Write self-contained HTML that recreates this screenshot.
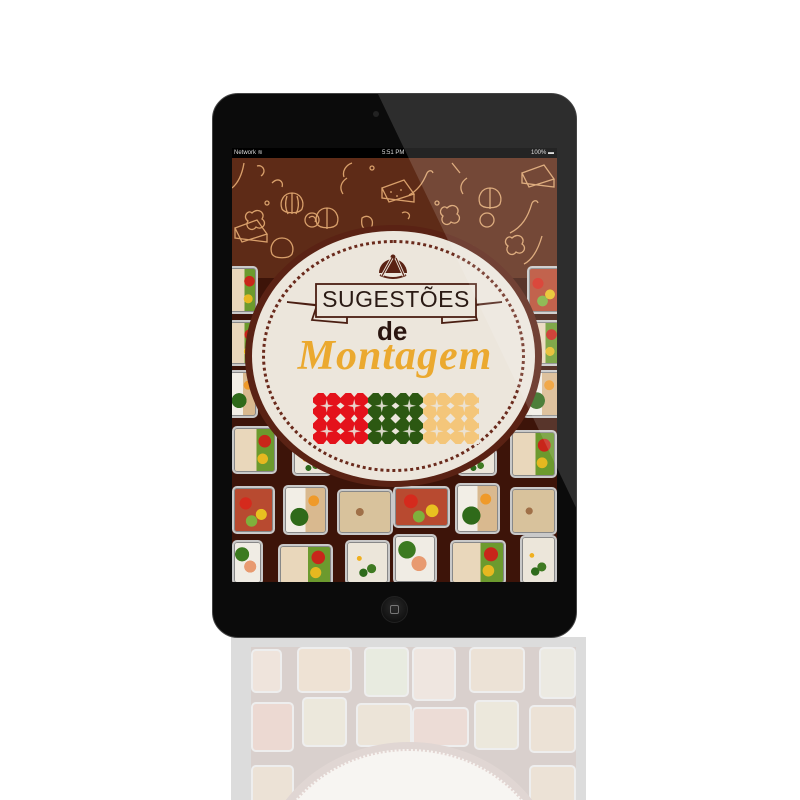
<!DOCTYPE html>
<html><head><meta charset="utf-8"><style>
*{margin:0;padding:0;box-sizing:border-box}
html,body{width:800px;height:800px;overflow:hidden}
body{background:#fff;position:relative;font-family:"Liberation Sans",sans-serif}
.ipad{position:absolute;left:212px;top:93px;width:365px;height:545px;background:#0b0b0b;border-radius:26px;border:1px solid #444;overflow:hidden}
.screen{position:absolute;width:325px;height:434px;background:#3d1409;overflow:hidden}
.bx{position:absolute;border:2px solid #c9c9c9;border-radius:5px;box-shadow:0 0 0 1px #888 inset}
.rice{background:radial-gradient(circle at 30% 40%,#f0b020 0 6%,transparent 7%),radial-gradient(circle at 60% 65%,#3f7a22 0 12%,transparent 13%),radial-gradient(circle at 40% 75%,#2e6b1c 0 10%,transparent 11%),#ece6da}
.chk{background:radial-gradient(circle at 75% 30%,#c8261a 0 14%,transparent 15%),radial-gradient(circle at 70% 70%,#e6b820 0 12%,transparent 13%),linear-gradient(90deg,#e9d7bb 0 55%,#6c9a2e 55%)}
.sal{background:radial-gradient(circle at 30% 35%,#d52a1d 0 15%,transparent 16%),radial-gradient(circle at 70% 60%,#e8c020 0 14%,transparent 15%),radial-gradient(circle at 45% 75%,#7fb03c 0 14%,transparent 15%),#b84a30}
.pas{background:radial-gradient(circle at 40% 50%,#a07048 0 10%,transparent 11%),#d8c29c}
.brc{background:radial-gradient(circle at 35% 65%,#2f6a1a 0 22%,transparent 23%),radial-gradient(circle at 70% 30%,#ef9a2a 0 12%,transparent 13%),linear-gradient(90deg,#f2eee6 0 50%,#d9b98f 50%)}
.sal2{background:radial-gradient(circle at 30% 30%,#3c7a20 0 20%,transparent 21%),radial-gradient(circle at 60% 60%,#e89a70 0 20%,transparent 21%),#f0ece4}
</style></head><body>

<!-- reflection -->
<div style="position:absolute;left:231px;top:637px;width:355px;height:163px;background:#dcdcdc"></div>
<div style="position:absolute;left:251px;top:647px;width:325px;height:153px;overflow:hidden;">
 <div style="position:absolute;left:0;top:0;width:325px;height:153px;background:#d9d0cd"></div>
 <div class="bx" style="left:0;top:2px;width:31px;height:44px;background:#efe4dc;border-color:#eee;box-shadow:none"></div>
 <div class="bx" style="left:46px;top:0;width:55px;height:46px;background:#eee2d4;border-color:#eee;box-shadow:none"></div>
 <div class="bx" style="left:113px;top:0;width:45px;height:50px;background:#e8ebe0;border-color:#eee;box-shadow:none"></div>
 <div class="bx" style="left:161px;top:0;width:44px;height:54px;background:#efe6e0;border-color:#eee;box-shadow:none"></div>
 <div class="bx" style="left:218px;top:0;width:56px;height:46px;background:#ece2d6;border-color:#eee;box-shadow:none"></div>
 <div class="bx" style="left:288px;top:0;width:37px;height:52px;background:#eceae2;border-color:#eee;box-shadow:none"></div>
 <div class="bx" style="left:0;top:55px;width:43px;height:50px;background:#ecd9d2;border-color:#eee;box-shadow:none"></div>
 <div class="bx" style="left:51px;top:50px;width:45px;height:50px;background:#ece8dc;border-color:#eee;box-shadow:none"></div>
 <div class="bx" style="left:105px;top:56px;width:56px;height:44px;background:#ece4d8;border-color:#eee;box-shadow:none"></div>
 <div class="bx" style="left:161px;top:60px;width:57px;height:40px;background:#ecdcd6;border-color:#eee;box-shadow:none"></div>
 <div class="bx" style="left:223px;top:53px;width:45px;height:50px;background:#ece8dc;border-color:#eee;box-shadow:none"></div>
 <div class="bx" style="left:278px;top:58px;width:47px;height:48px;background:#ece2d6;border-color:#eee;box-shadow:none"></div>
 <div class="bx" style="left:0;top:118px;width:43px;height:40px;background:#ece2d6;border-color:#eee;box-shadow:none"></div>
 <div class="bx" style="left:278px;top:118px;width:47px;height:40px;background:#ece2d6;border-color:#eee;box-shadow:none"></div>
 <div style="position:absolute;left:8px;top:95px;width:300px;height:270px;border-radius:50%;background:#e0d6d3"></div>
 <div style="position:absolute;left:15px;top:102px;width:286px;height:258px;border-radius:50%;background:#f7f5f2;border:2px dotted #e3d5d2"></div>
 <div style="position:absolute;left:82px;top:158px;width:165px;height:20px;background:linear-gradient(90deg,#f0b8b4 0 33%,#c8d2bb 33% 66%,#f8e6cc 66%)"></div>
</div>

<div class="ipad">
 <div style="position:absolute;left:160px;top:17px;width:6px;height:6px;border-radius:50%;background:#222"></div>
 <div class="screen" style="left:19px;top:54px;">
  <div style="position:absolute;left:0;top:0;width:325px;height:10px;background:#000;color:#ddd;font-size:6px;line-height:10px">
   <span style="position:absolute;left:2px">Network ≋</span>
   <span style="position:absolute;left:150px">5:51 PM</span>
   <span style="position:absolute;right:3px">100% ▬</span>
  </div>
  <div style="position:absolute;left:0;top:10px;width:325px;height:120px;background:#5e2b17"></div>
  <svg style="position:absolute;left:0;top:10px" width="325" height="140" fill="none" stroke="#d9a06b" stroke-width="1.3">
   <path d="M60 35c-8 0-13 8-10 16 3 5 17 5 20 0 3-8-2-16-10-16zM60 35v21M55 38c-2 6-2 12 1 18M65 38c2 6 2 12-1 18"/>
   <path d="M150 30l22-8 10 14-25 8zM150 30v10l32 4v-8M158 34h2M168 32h2M164 38h2"/>
   <path d="M195 15c-4 10-10 18-18 22M195 15c2-3 5-3 6 0"/>
   <path d="M258 30c-8 0-13 8-10 16 3 5 17 5 20 0 3-8-2-16-10-16zM258 30v21"/>
   <path d="M290 15l22-8 10 14-25 8zM290 15v10l32 4v-8"/>
   <path d="M95 50c-8 0-13 8-10 16 3 5 17 5 20 0 3-8-2-16-10-16zM95 50v21"/>
   <circle cx="80" cy="62" r="7"/><path d="M77 60a3 3 0 0 1 6 4"/>
   <circle cx="255" cy="62" r="7"/>
   <path d="M20 55c6-6 14 0 10 6 6 4 0 12-6 8-4 6-12 0-8-6-6-4 0-12 4-8z"/>
   <path d="M215 50c6-6 14 0 10 6 6 4 0 12-6 8-4 6-12 0-8-6-6-4 0-12 4-8z"/>
   <path d="M3 70l22-8 10 14-25 8zM3 70v10l32 4v-8"/>
   <path d="M50 80c-8 0-13 8-10 16 3 5 17 5 20 0 3-8-2-16-10-16z"/>
   <path d="M300 45c-4 14-10 24-22 30M300 45c2-3 5-3 6 0"/>
   <path d="M12 5c-2 12-6 20-12 25M130 60c6-4 12 0 10 8-4 6-12 4-10-8z"/>
   <path d="M280 80c6-6 14 0 10 6 6 4 0 12-6 8-4 6-12 0-8-6-6-4 0-12 4-8z"/>
   <path d="M310 78c-4 14-10 24-18 28"/>
   <path d="M25 8c6-2 10 6 4 10M115 20c-6 4-8 10-4 16M235 20c-6 4-8 10-4 16"/>
   <path d="M120 5c-6 2-10 8-8 14M220 5l8 10M170 55c5-3 10 2 6 6M40 25c6-6 12-2 10 4"/>
   <circle cx="140" cy="10" r="2"/><circle cx="205" cy="45" r="2"/><circle cx="110" cy="80" r="2"/><circle cx="240" cy="90" r="2"/><circle cx="35" cy="45" r="2"/>
  </svg>
  <div class="bx chk" style="left:-4px;top:118px;width:30px;height:48px"></div>
  <div class="bx chk" style="left:-4px;top:172px;width:30px;height:46px"></div>
  <div class="bx brc" style="left:-4px;top:222px;width:30px;height:48px"></div>
  <div class="bx chk" style="left:0;top:278px;width:45px;height:48px"></div>
  <div class="bx sal" style="left:295px;top:118px;width:34px;height:48px"></div>
  <div class="bx chk" style="left:295px;top:172px;width:34px;height:46px"></div>
  <div class="bx brc" style="left:290px;top:222px;width:40px;height:48px"></div>
  <div class="bx chk" style="left:278px;top:282px;width:47px;height:48px"></div>
  <div class="bx rice" style="left:60px;top:300px;width:40px;height:28px"></div>
  <div class="bx rice" style="left:225px;top:300px;width:40px;height:28px"></div>
  <div class="bx sal" style="left:0;top:338px;width:43px;height:48px"></div>
  <div class="bx brc" style="left:51px;top:337px;width:45px;height:50px"></div>
  <div class="bx pas" style="left:105px;top:341px;width:56px;height:46px"></div>
  <div class="bx sal" style="left:161px;top:338px;width:57px;height:42px"></div>
  <div class="bx brc" style="left:223px;top:335px;width:45px;height:51px"></div>
  <div class="bx pas" style="left:278px;top:339px;width:47px;height:48px"></div>
  <div class="bx sal2" style="left:0;top:392px;width:31px;height:45px"></div>
  <div class="bx chk" style="left:46px;top:396px;width:55px;height:42px"></div>
  <div class="bx rice" style="left:113px;top:392px;width:45px;height:45px"></div>
  <div class="bx sal2" style="left:161px;top:386px;width:44px;height:50px"></div>
  <div class="bx chk" style="left:218px;top:392px;width:56px;height:45px"></div>
  <div class="bx rice" style="left:288px;top:387px;width:37px;height:50px"></div>
  <div style="position:absolute;left:13px;top:77px;width:297px;height:262px;border-radius:50%;background:#5a2214"></div>
  <div style="position:absolute;left:20px;top:83px;width:283px;height:250px;border-radius:50%;background:#ece6dc"></div>
  <div style="position:absolute;left:30px;top:92px;width:263px;height:232px;border-radius:50%;border:3px dotted #6a2a1c"></div>
  <svg style="position:absolute;left:138px;top:97px" width="46" height="34">
   <path d="M9 28a14 14 0 0 1 28 0z" fill="#5a2214"/><circle cx="23" cy="12" r="2.5" fill="#5a2214"/>
   <path d="M10 30q13 6 26 0" stroke="#5a2214" stroke-width="2" fill="none"/>
   <path d="M12 31l10-18M34 31l-8-18" stroke="#ece6dc" stroke-width="3"/>
   <path d="M12 31l10-18M34 31l-8-18" stroke="#5a2214" stroke-width="1.2"/>
  </svg>
  <svg style="position:absolute;left:50px;top:130px" width="225" height="55" fill="#ece6dc" stroke="#4a1e12" stroke-width="1.8">
   <path d="M5 24l30 3-5 15 35 3v-14zM220 24l-30 3 5 15-35 3v-14z"/>
   <rect x="34" y="6" width="160" height="33"/>
  </svg>
  <div style="position:absolute;left:84px;top:138px;width:160px;text-align:center;font-size:23px;color:#2a1a14;letter-spacing:0.5px">SUGESTÕES</div>
  <div style="position:absolute;left:145px;top:168px;font-size:26px;font-weight:bold;color:#2a1510">de</div>
  <div style="position:absolute;left:38px;top:184px;width:250px;text-align:center;font-family:'Liberation Serif',serif;font-style:italic;font-weight:bold;font-size:42px;color:#eba92f;letter-spacing:1px">Montagem</div>
  <svg style="position:absolute;left:81px;top:245px" width="166" height="51">
   <defs>
    <pattern id="p" width="27.5" height="25.5" patternUnits="userSpaceOnUse">
     <polygon points="0,0 5,0 0,5" fill="#ece6dc"/><polygon points="27.5,0 22.5,0 27.5,5" fill="#ece6dc"/>
     <polygon points="0,25.5 5,25.5 0,20.5" fill="#ece6dc"/><polygon points="27.5,25.5 22.5,25.5 27.5,20.5" fill="#ece6dc"/>
     <polygon points="10.5,0 17,0 13.75,4" fill="#ece6dc"/><polygon points="10.5,25.5 17,25.5 13.75,21.5" fill="#ece6dc"/>
     <polygon points="0,9.5 0,16 4,12.75" fill="#ece6dc"/><polygon points="27.5,9.5 27.5,16 23.5,12.75" fill="#ece6dc"/>
     <polygon points="13.75,6 15,11.5 20.5,12.75 15,14 13.75,19.5 12.5,14 7,12.75 12.5,11.5" fill="#ece6dc" opacity="0.9"/>
    </pattern>
   </defs>
   <rect x="0" width="55" height="51" fill="#e4121b"/>
   <rect x="55" width="55" height="51" fill="#2c5812"/>
   <rect x="110" width="56" height="51" fill="#f4c67a"/>
   <rect width="166" height="51" fill="url(#p)"/>
  </svg>
 </div>
 <div style="position:absolute;left:0;top:0;width:365px;height:545px;background:rgba(255,255,255,0.14);clip-path:polygon(165px 0,365px 0,365px 545px,426px 545px)"></div>
 <div style="position:absolute;left:168px;top:502px;width:27px;height:27px;border-radius:50%;background:radial-gradient(circle at 50% 40%,#2a2a2a,#080808);border:1px solid #222"></div>
 <div style="position:absolute;left:177px;top:511px;width:9px;height:9px;border:1px solid #777;border-radius:2px"></div>
</div>
</body></html>
